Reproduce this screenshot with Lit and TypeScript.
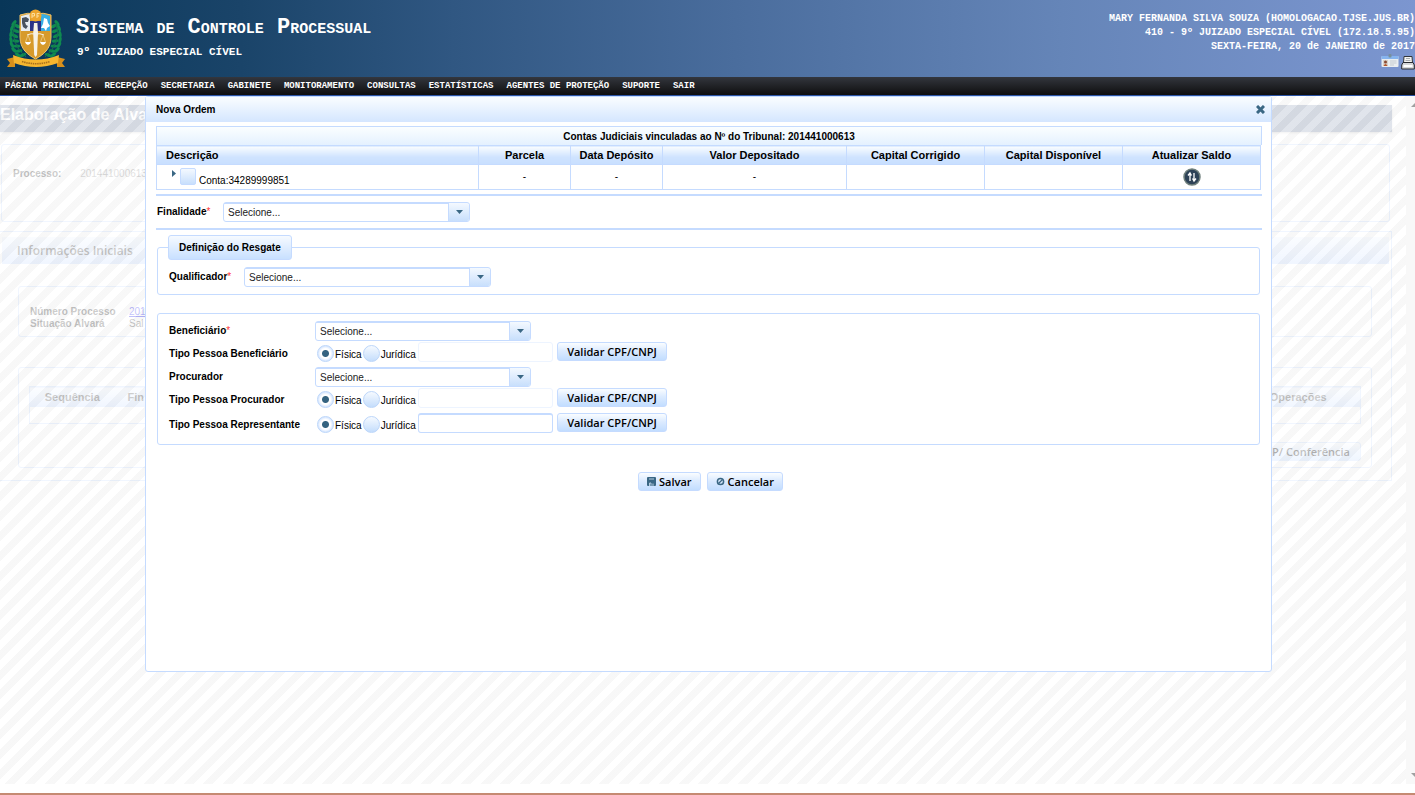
import { LitElement, html, css, svg } from "lit";
import { customElement, property, state } from "lit/decorators.js";

const sharedControls = css`
  *, *::before, *::after { box-sizing: border-box; }
  button {
    font: 600 11px/15px "Open Sans", "Noto Sans", sans-serif;
    color: #000;
    height: 19px;
    padding: 0 10px 1px;
    border: 1px solid #c5dbff;
    border-radius: 3px;
    background: linear-gradient(#fafdff, #dcebff 45%, #c2ddff);
    display: inline-flex;
    align-items: center;
    justify-content: center;
    gap: 3px;
    white-space: nowrap;
  }
  .select {
    display: inline-grid;
    grid-template-columns: 1fr 21px;
    height: 20px;
    border: 1px solid #c5dbff;
    border-radius: 3px;
    background: linear-gradient(#c5dbff 0 1px, #fff 1px);
    overflow: hidden;
  }
  .select select {
    grid-area: 1 / 1 / 2 / 3;
    appearance: none;
    border: 0;
    background: none;
    padding: 2px 24px 0 4px;
    font: 10px/14px "Liberation Sans", Arial, sans-serif;
    color: #222;
    min-width: 0;
    outline: none;
  }
  .select .arrow {
    grid-area: 1 / 2;
    pointer-events: none;
    border-left: 1px solid #c5dbff;
    background: linear-gradient(#f4f9ff, #c8dffc);
    display: flex;
    align-items: center;
    justify-content: center;
  }
  .arrow svg { width: 7px; height: 4px; fill: #3a6784; }
`;

@customElement("court-crest")
class CourtCrest extends LitElement {
  static styles = css`
    :host { display: block; width: 60px; height: 60px; }
    svg { display: block; width: 100%; height: 100%; }
  `;
  private leaf(x: number, y: number, r: number) {
    return svg`<ellipse cx=${x} cy=${y} rx="3.4" ry="1.6" transform="rotate(${r} ${x} ${y})"></ellipse>`;
  }
  render() {
    const left: number[][] = [[8, 14, -50], [11, 17, 30], [6, 19, -70], [10, 22, 20], [5, 25, -80], [9, 27, 25], [5, 31, 80], [10, 32, 10], [6, 36, 60], [11, 37, 0], [8, 41, 45], [13, 42, -10], [12, 46, 35], [17, 46, -20]];
    return html`<svg viewBox="0 0 60 60" aria-hidden="true">
      <g fill="#0f8a50">
        ${left.map(([x, y, r]) => this.leaf(x, y, r))}
        ${left.map(([x, y, r]) => this.leaf(59 - x, y, -r))}
      </g>
      <path d="M9 14 Q3 34 20 48 M50 14 Q56 34 39 48" fill="none" stroke="#16744a" stroke-width="1"></path>
      <path d="M14 6 Q22 3 29.5 5 Q37 3 45 6 V28 C45 40 37 46 29.5 50 C22 46 14 40 14 28Z" fill="#d79a2b" stroke="#f0c46a" stroke-width="1"></path>
      <path d="M15 7 Q22 5 24 5 V22 H15Z" fill="#e8edf2"></path>
      <path d="M16 9 l4 -1 3 2 -1 3 -3 0 1 3 2 1 -2 3 -3 -2 -1 -4z" fill="#4a5360"></path>
      <path d="M24 12 H35 V22 H24Z" fill="#2b3186"></path>
      <path d="M35 5 Q40 5 44 7 V22 H35Z" fill="#38aee4"></path>
      <path d="M38 9 l3 1 1 4 2 3 -3 2 -1 3 -2 -3 -3 0 2 -4z" fill="#fff"></path>
      <path d="M28 14 h3.4 l.6 10 -1 22 -1.4 2 -1.4 -2 -1 -22z" fill="#f7f2e6"></path>
      <path d="M21 26 Q25 24 29.5 25 Q34 24 38 26" fill="none" stroke="#f7f2e6" stroke-width="1"></path>
      <path d="M22 26 L19.500 33 M22 26 L24.500 33 M37 26 L34.500 33 M37 26 L39.500 33" stroke="#f4dda4" stroke-width=".6"></path>
      <path d="M19 33 h6 q-1 3 -3 3 t-3 -3z M34 33 h6 q-1 3 -3 3 t-3 -3z" fill="#fff"></path>
      <circle cx="29.500" cy="6.500" r="6" fill="#eda62e"></circle>
      <path d="M26 9 V4.500 h2.500 v2.500 h-2.500 M31 9 V4.500 h2.500 M31 7 h2" stroke="#fbe0a0" fill="none" stroke-width="1"></path>
      <path d="M1 50 L9 48 V58 L1 58 L4 54Z M59 50 L51 48 V58 L59 58 L56 54Z" fill="#d7901c"></path>
      <path d="M7 46 Q30 55 53 46 L52 54 Q30 62 8 54Z" fill="#f6b62f"></path>
      <path d="M16 52.500 Q30 57 44 52.500" fill="none" stroke="#a8701c" stroke-width="1.600" stroke-dasharray="1.500 .7"></path>
    </svg>`;
  }
}

@customElement("person-row")
class PersonRow extends LitElement {
  static styles = [sharedControls, css`
    :host { display: flex; align-items: flex-start; height: 20px; }
    .name { width: 146px; flex: none; padding-top: 5px; font-weight: bold; }
    .choices { display: flex; width: 104px; flex: none; align-items: center; padding: 3px 0 0 2px; }
    .choices label { margin: 3px 1px 0 1px; }
    input[type="radio"] {
      appearance: none;
      width: 17px;
      height: 17px;
      flex: none;
      margin: 0;
      border: 1px solid #bcd6fa;
      border-radius: 50%;
      background: linear-gradient(#f6faff, #c4ddfc);
    }
    input[type="radio"]:checked {
      background: radial-gradient(circle, #356380 0 3px, #fff 4px 5px, #dceaff 7px);
    }
    .document {
      width: 135px;
      height: 20px;
      margin: 0 4px 0 -1px;
      padding: 2px 4px;
      border: 1px solid #c5dbff;
      border-top-width: 2px;
      border-radius: 3px;
      background: #fff;
      font: 10px/14px "Liberation Sans", Arial, sans-serif;
      outline: none;
    }
    .document:disabled { border-color: #edf4ff; border-top-width: 1px; }
    button { width: 110px; padding: 0 0 1px; }
  `];
  @property() label = "";
  @property({ type: Boolean }) locked = false;
  @state() private kind = "fisica";
  render() {
    return html`
      <span class="name" id="name">${this.label}</span>
      <span class="choices" role="radiogroup" aria-labelledby="name">
        <input type="radio" name="kind" id="fisica" .checked=${this.kind === "fisica"} @change=${() => (this.kind = "fisica")}>
        <label for="fisica">Física</label>
        <input type="radio" name="kind" id="juridica" .checked=${this.kind === "juridica"} @change=${() => (this.kind = "juridica")}>
        <label for="juridica">Jurídica</label>
      </span>
      <input class="document" aria-labelledby="name" ?disabled=${this.locked}>
      <button type="button">Validar CPF/CNPJ</button>
    `;
  }
}

@customElement("app-root")
class AppRoot extends LitElement {
  static styles = [sharedControls, css`
    :host {
      display: flex;
      flex-direction: column;
      min-height: 100vh;
      background: #fff;
      color: #000;
      font: 10px/14px "Liberation Sans", Arial, sans-serif;
      overflow: hidden;
    }
    .banner {
      display: flex;
      height: 77px;
      padding-left: 6px;
      background: linear-gradient(90deg, #083658, #1a4469 17%, #305782 32%, #4a6d9d 52%, #6585b8 75%, #7c96d0);
      color: #fff;
      font-family: "Liberation Mono", monospace;
      font-weight: bold;
    }
    .crest { margin-top: 9px; flex: none; }
    .titles { padding: 14px 0 0 10px; flex: 1; }
    .titles h1 { margin: 0; font-size: 22px; line-height: 27px; font-variant: small-caps; }
    .titles p { margin: 0 0 0 1px; font-size: 11px; line-height: 22px; }
    .session { text-align: right; font-size: 10px; line-height: 14px; padding-top: 12px; }
    .session p { margin: 0; }
    .session .tools { display: flex; justify-content: flex-end; gap: 2px; }
    .tools svg { height: 16px; display: block; }
    .menu {
      display: flex;
      gap: 13px;
      height: 19px;
      padding-left: 5px;
      background: linear-gradient(#33363d, #0e0e0f);
      border-bottom: 1px solid #2b54a5;
      font: bold 9px/19px "Liberation Mono", monospace;
    }
    .menu a { color: #fff; text-decoration: none; }

    .workspace { position: relative; flex: 1; padding: 9px 23px 0 0; color: #333; }
    .page { opacity: .3; }
    .page h2 { margin: 0 0 12px; height: 27px; background: #8595b2; color: #fff; font-size: 16px; line-height: 20px; box-shadow: 0 1px 2px #ccc; }
    .process { height: 78px; margin: 0 2px 9px 1px; padding: 22px 11px; border: 1px solid #c5dbff; border-radius: 3px; }
    .process b { margin-right: 16px; }
    .process span { color: #888; }
    .section { height: 250px; border: 1px solid #c5dbff; border-left: 0; padding: 5px 2px; }
    .section h3 { margin: 0; height: 27px; padding-left: 15px; background: linear-gradient(#eef6ff, #c5dbff); font: 600 12px/27px "Open Sans", sans-serif; color: #333; }
    .inner { margin: 22px 17px 0 16px; height: 51px; padding: 19px 11px; border: 1px solid #c5dbff; border-radius: 3px; line-height: 12px; font-weight: bold; }
    .facts { display: grid; grid-template-columns: 99px 1fr; margin: 0; }
    .facts dd { margin: 0; font-weight: normal; }
    .inner.orders { margin-top: 30px; height: 101px; padding: 18px 10px; }
    .background-table { width: 100%; border-collapse: collapse; border: 1px solid #c5dbff; font-size: 11px; line-height: 16px; }
    .background-table th { height: 20px; padding: 0; background: linear-gradient(#f4f9ff, #c5dbff); }
    .background-table td { height: 17px; padding: 0; }
    .background-table .seq { width: 85px; }
    .background-table .fin { text-align: left; padding-left: 13px; }
    .background-table .ops { width: 124px; }
    .send { display: flex; justify-content: flex-end; margin-top: 18px; }
    .send button { width: 140px; justify-content: flex-end; }

    .veil {
      position: absolute;
      inset: 0 9px 0 0;
      background: repeating-linear-gradient(135deg, rgba(110, 110, 110, .05) 0 7px, rgba(255, 255, 255, .2) 7px 14px);
    }
    .track { position: absolute; inset: 0 0 0 auto; width: 9px; background: #f8f8f8; display: flex; flex-direction: column; justify-content: space-between; align-items: flex-end; padding: 7px 0; }
    .track svg { width: 4px; height: 4px; fill: #a0a0a0; }

    .dialog {
      position: absolute;
      inset: 0 143px auto 145px;
      height: 576px;
      background: #fff;
      border: 1px solid #c5dbff;
      border-radius: 3px;
      color: #000;
    }
    .dialog header { display: flex; justify-content: space-between; align-items: center; height: 25px; padding: 1px 6px 0 10px; background: linear-gradient(#fafdff, #d6e7ff); border-bottom: 1px solid #d6e6ff; }
    .dialog h2 { margin: 0; font-size: 10px; }
    .dialog .close { width: 10px; height: 10px; padding: 0; border: 0; background: none; }
    .close svg { width: 9px; height: 9px; stroke: #3a6784; stroke-width: 3; }
    .body { padding: 4px 9px 0 10px; }
    .caption { height: 19px; border: 1px solid #c5dbff; border-bottom: 0; background: linear-gradient(#fbfeff, #e4f1ff); text-align: center; font-weight: bold; line-height: 20px; }
    .accounts { width: calc(100% - 1px); table-layout: fixed; border-collapse: collapse; }
    .accounts th, .accounts td { border: 1px solid #c5dbff; padding: 0; text-align: center; }
    .accounts th { height: 19px; font-size: 11px; background: linear-gradient(#fafdff, #cfe3ff 60%, #c8dfff); line-height: 16px; }
    .accounts td { height: 25px; }
    .accounts th:first-child { text-align: left; padding-left: 9px; }
    .accounts .n { width: 92px; }
    .accounts .w { width: 184px; }
    .accounts .m { width: 138px; }
    .account { display: flex; padding-left: 15px; height: 22px; }
    .account svg { width: 4px; height: 7px; margin-top: 4px; fill: #3a6784; }
    .account input { appearance: none; width: 16px; height: 17px; margin: 2px 3px 0 4px; border: 1px solid #c5dbff; border-radius: 2px; background: linear-gradient(#f4f9ff, #c8dffc); }
    .account label { margin-top: 8px; }
    .update { width: 18px; height: 18px; padding: 0; border: 0; border-radius: 50%; background: none; vertical-align: middle; }
    .update svg { width: 18px; height: 18px; }
    hr { margin: 0; border: 0; height: 2px; background: #c5dbff; }
    .accounts + hr { margin-top: 4px; }
    .field { display: flex; align-items: center; height: 20px; }
    .field > label { font-weight: bold; }
    em { color: #f33; font-style: normal; font-weight: normal; }
    .purpose { padding-left: 1px; margin: 6px 0; }
    .purpose > label { width: 66px; }
    .wide { width: 247px; }
    fieldset { margin: 0 2px 0 1px; border: 1px solid #c5dbff; border-radius: 3px; min-width: 0; }
    .rescue { padding: 7px 11px 7px; margin-top: 5px; }
    legend { margin-left: -1px; height: 25px; padding: 0 10px; border: 1px solid #c5dbff; border-radius: 3px; background: linear-gradient(#f6faff, #c8e0ff); font-weight: bold; line-height: 23px; }
    .rescue .field > label { width: 75px; }
    .people { margin-top: 18px; padding: 7px 11px 11px; }
    .people .field > label { width: 146px; }
    .people .field { margin-bottom: 1px; }
    .people .select { width: 216px; }
    person-row + .field, person-row + person-row { margin-top: 5px; }
    .actions { display: flex; justify-content: center; gap: 6px; margin-top: 27px; padding-left: 3px; }
    .actions button { padding: 0 8px 1px; }
    .actions svg { width: 9px; height: 9px; }
    .foot { height: 11px; padding-top: 9px; }
    .foot div { height: 2px; background: #c58a72; }
  `];

  private menu = ["PÁGINA PRINCIPAL", "RECEPÇÃO", "SECRETARIA", "GABINETE", "MONITORAMENTO", "CONSULTAS", "ESTATÍSTICAS", "AGENTES DE PROTEÇÃO", "SUPORTE", "SAIR"];
  private people = ["Tipo Pessoa Procurador", "Tipo Pessoa Representante"];

  private picker(id: string, size = "") {
    return html`<span class="select ${size}">
      <select id=${id}><option>Selecione...</option></select>
      <span class="arrow"><svg viewBox="0 0 7 4"><path d="M0 0H7L3.500 4Z"></path></svg></span>
    </span>`;
  }

  render() {
    return html`
      <header class="banner">
        <court-crest class="crest"></court-crest>
        <div class="titles">
          <h1>Sistema de Controle Processual</h1>
          <p>9º JUIZADO ESPECIAL CÍVEL</p>
        </div>
        <div class="session">
          <p>MARY FERNANDA SILVA SOUZA (HOMOLOGACAO.TJSE.JUS.BR)</p>
          <p>410 - 9º JUIZADO ESPECIAL CÍVEL (172.18.5.95)</p>
          <p>SEXTA-FEIRA, 20 de JANEIRO de 2017</p>
          <div class="tools">
            <svg width="18" viewBox="0 0 18 16" aria-hidden="true">
              <rect x="0.500" y="2" width="17" height="11" rx="1" fill="#e9edf0"></rect>
              <rect x="0.500" y="2" width="17" height="3" fill="#86b4ee"></rect>
              <rect x="7.500" y="0" width="3" height="3.500" rx="1" fill="#78909c"></rect>
              <rect x="2" y="6" width="5" height="6" fill="#d9d2c8"></rect>
              <circle cx="4.500" cy="8" r="1.500" fill="#8a4b34"></circle>
              <path d="M2.500 12q2-4 4 0z" fill="#b4552d"></path>
              <path d="M9 7h6.500M9 9h6.500M9 11h4" stroke="#c5cbd0"></path>
            </svg>
            <svg width="14" viewBox="0 0 14 16" aria-hidden="true">
              <path d="M3 2.500H11L11.500 9H2.500Z" fill="#f4f4f2" stroke="#33363b"></path>
              <path d="M5 4.500h4M4.500 6.500h5" stroke="#a9adb1"></path>
              <path d="M2 8.500H12L13.300 11V15H.7V11Z" fill="#d4d6d8" stroke="#292b30"></path>
              <path d="M2.500 12H11.500" stroke="#fff" stroke-width="2"></path>
            </svg>
          </div>
        </div>
      </header>
      <nav class="menu">${this.menu.map((m) => html`<a href="#">${m}</a>`)}</nav>

      <main class="workspace">
        <div class="page">
          <h2>Elaboração de Alva</h2>
          <div class="process"><b>Processo:</b> <span>201441000613</span></div>
          <section class="section">
            <h3>Informações Iniciais</h3>
            <div class="inner">
              <dl class="facts">
                <dt>Número Processo</dt><dd><a href="#">201</a></dd>
                <dt>Situação Alvará</dt><dd>Sal</dd>
              </dl>
            </div>
            <div class="inner orders">
              <table class="background-table">
                <tr><th class="seq">Sequência</th><th class="fin">Fin</th><th class="ops">Operações</th></tr>
                <tr><td></td><td></td><td></td></tr>
              </table>
              <div class="send"><button type="button">P/ Conferência</button></div>
            </div>
          </section>
        </div>
        <div class="veil"></div>
        <div class="track">
          <svg viewBox="0 0 4 4"><path d="M4 0V4H0Z"></path></svg>
          <svg viewBox="0 0 4 4"><path d="M0 0H4V4Z"></path></svg>
        </div>

        <section class="dialog" role="dialog" aria-labelledby="dialog-title">
          <header>
            <h2 id="dialog-title">Nova Ordem</h2>
            <button class="close" type="button" aria-label="Fechar"><svg viewBox="0 0 9 9"><path d="M1 1L8 8M8 1L1 8"></path></svg></button>
          </header>
          <div class="body">
            <div class="caption">Contas Judiciais vinculadas ao Nº do Tribunal: 201441000613</div>
            <table class="accounts">
              <tr>
                <th>Descrição</th><th class="n">Parcela</th><th class="n">Data Depósito</th><th class="w">Valor Depositado</th>
                <th class="m">Capital Corrigido</th><th class="m">Capital Disponível</th><th class="m">Atualizar Saldo</th>
              </tr>
              <tr>
                <td><div class="account">
                  <svg viewBox="0 0 4 7"><path d="M0 0L4 3.500L0 7Z"></path></svg>
                  <input type="checkbox" id="account">
                  <label for="account">Conta:34289999851</label>
                </div></td>
                <td>-</td><td>-</td><td>-</td><td></td><td></td>
                <td><button class="update" type="button" aria-label="Atualizar Saldo">
                  <svg viewBox="0 0 18 18">
                    <circle cx="9" cy="9" r="8" fill="#2d4257" stroke="#6f7f7c" stroke-width="1.500"></circle>
                    <path d="M7 13V6M5 7.500L7 5L8.500 7.500M11 5V12M9.500 10.500L11 13L13 10.500" fill="none" stroke="#fff" stroke-width="1.300"></path>
                  </svg>
                </button></td>
              </tr>
            </table>
            <hr>
            <div class="field purpose"><label for="purpose">Finalidade<em>*</em></label>${this.picker("purpose", "wide")}</div>
            <hr>
            <fieldset class="rescue">
              <legend>Definição do Resgate</legend>
              <div class="field"><label for="qualifier">Qualificador<em>*</em></label>${this.picker("qualifier", "wide")}</div>
            </fieldset>
            <fieldset class="people">
              <div class="field"><label for="beneficiary">Beneficiário<em>*</em></label>${this.picker("beneficiary")}</div>
              <person-row label="Tipo Pessoa Beneficiário" locked></person-row>
              <div class="field"><label for="attorney">Procurador</label>${this.picker("attorney")}</div>
              ${this.people.map((p, i) => html`<person-row label=${p} ?locked=${i === 0}></person-row>`)}
            </fieldset>
            <div class="actions">
              <button type="button">
                <svg viewBox="0 0 9 9"><path d="M0 1Q0 0 1 0H8Q9 0 9 1V8Q9 9 8 9H1Q0 9 0 8Z" fill="#3a6784"></path><path d="M2 2H7M2.500 9V6H4V9M6 6.500V9" stroke="#c3d8ea" stroke-width=".9" fill="none"></path></svg>Salvar
              </button>
              <button type="button">
                <svg viewBox="0 0 9 9"><circle cx="4.500" cy="4.500" r="3.100" fill="none" stroke="#3a6784" stroke-width="1.500"></circle><path d="M2.500 6.500L6.500 2.500" stroke="#3a6784" stroke-width="1.200"></path></svg>Cancelar
              </button>
            </div>
          </div>
        </section>
      </main>
      <footer class="foot"><div></div></footer>
    `;
  }
}
